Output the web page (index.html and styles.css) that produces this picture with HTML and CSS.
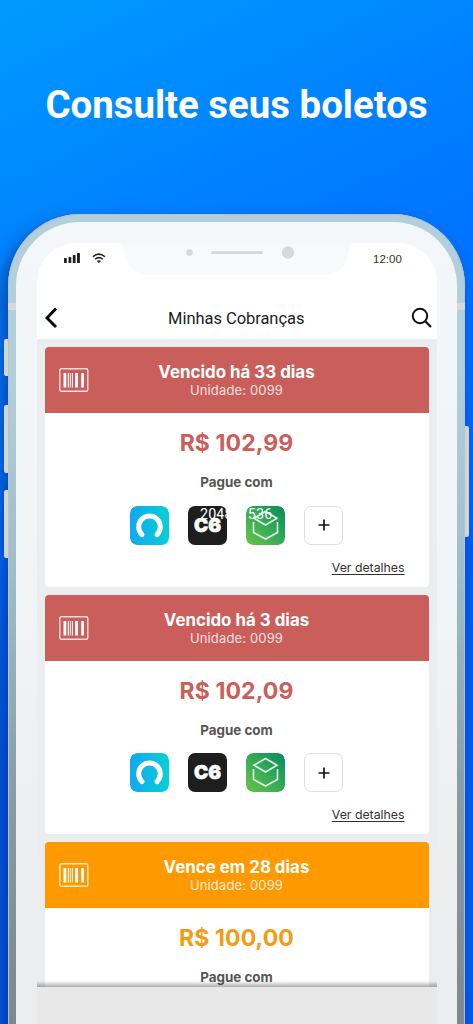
FILE: index.html
```
<!DOCTYPE html>
<html lang="pt-BR">
<head>
<meta charset="utf-8">
<title>Consulte seus boletos</title>
<link rel="stylesheet" href="styles.css">
</head>
<body>
<svg class="defs" width="0" height="0" aria-hidden="true">
  <defs>
    <linearGradient id="cyan" x1="0" y1="0" x2="1" y2="0"><stop offset="0" stop-color="#12a8ee"/><stop offset="1" stop-color="#06d0d5"/></linearGradient>
    <linearGradient id="green" x1="0" y1="1" x2="1" y2="0"><stop offset="0" stop-color="#68c547"/><stop offset=".5" stop-color="#35ab55"/><stop offset="1" stop-color="#078b60"/></linearGradient>
    <symbol id="barcode" viewBox="0 0 30 24">
      <rect x=".8" y=".8" width="28" height="22.4" rx="1.5" fill="none" stroke="#fff" stroke-opacity=".8" stroke-width="1.4"/>
      <path fill="#fff" d="M4.500 5h2.800v14.500H4.500zM8.800 5h1.300v14.500H8.800zM11.200 5h.9v14.500h-.9zM13 5h.9v14.500H13zM16.200 5H19v14.500h-2.800zM22.200 5H25v14.500h-2.800z"/>
    </symbol>
    <symbol id="arch" viewBox="0 0 39 39">
      <rect width="39" height="39" rx="7" fill="url(#cyan)"/>
      <path d="M12 28.600A10.800 10.800 0 1 1 27 28.600" fill="none" stroke="#fff" stroke-width="5" stroke-linecap="round"/>
    </symbol>
    <symbol id="box" viewBox="0 0 39 39">
      <rect width="39" height="39" rx="7" fill="url(#green)"/>
      <path d="M19.500 5.500L31 12.200 19.500 19 8 12.200zM7.500 16v10.500l12 6.500 12-6.500V16" fill="none" stroke="#e2f6e8" stroke-width="1.600"/>
    </symbol>
  </defs>
</svg>
<main class="page">
  <h1 class="headline">Consulte seus boletos</h1>
  <div class="phone">
    <i class="key key-mute"></i><i class="key key-up"></i><i class="key key-down"></i><i class="key key-power"></i>
    <i class="band band-left"></i><i class="band band-right"></i>
    <div class="bezel">
      <div class="screen">
        <div class="status">
          <svg class="signals" width="44" height="14" viewBox="0 0 44 14">
            <path fill="#222" d="M0 7.500q0-.5.500-.5h1.800q.5 0 .5.500V12H0zM4.500 6.500q0-.5.500-.5h1.800q.5 0 .5.500V12H4.500zM8.800 4.500q0-.5.500-.5h1.800q.5 0 .5.500V12H8.800zM13 2.500q0-.5.500-.5h1.900q.5 0 .5.500V12H13z"/>
            <g fill="none" stroke="#222" stroke-width="1.500"><path d="M28.900 5.800q6-5.400 12 0M31 8.300q3.900-3.400 7.800 0"/></g>
            <path fill="#222" d="M32.800 9.900q2.100-1.500 4.200 0L34.900 12z"/>
          </svg>
          <svg class="notch" width="237" height="32" viewBox="0 0 237 32"><path fill="#f7f9fb" d="M0 0H237Q231 0 231 7C228 24 220 32 204 32H31C17 32 8 22 6 7Q6 0 0 0z"/><g fill="#d8d8d8"><circle cx="71.500" cy="9.500" r="3.300"/><rect x="93" y="8" width="52" height="3" rx="1.500"/><circle cx="170" cy="9.500" r="6.200"/></g></svg>
          <span class="time">12:00</span>
        </div>
        <header class="bar">
          <svg width="14" height="22" viewBox="0 0 14 22"><path d="M12 1.500L3 11l9 9" fill="none" stroke="#000" stroke-width="2.900"/></svg>
          <span class="title">Minhas Cobranças</span>
          <svg width="22" height="22" viewBox="0 0 22 22"><circle cx="9" cy="9" r="7.200" fill="none" stroke="#111" stroke-width="2"/><path d="M14 14l6 6" stroke="#111" stroke-width="2.300"/></svg>
        </header>
        <div class="list">
          <article class="card">
            <div class="card-head overdue"><svg class="barcode"><use href="#barcode"/></svg><strong>Vencido há 33 dias</strong><span>Unidade: 0099</span></div>
            <div class="amount red">R$ 102,99</div>
            <div class="pay">Pague com</div>
            <div class="apps"><svg><use href="#arch"/></svg><div class="c6">C6</div><svg><use href="#box"/></svg><div class="more"><svg viewBox="0 0 12 12"><path d="M6 .5v11M.5 6h11" stroke="#111" stroke-width="1.700"/></svg></div><span class="dims">2048x1536</span></div>
            <a class="details">Ver detalhes</a>
          </article>
          <article class="card">
            <div class="card-head overdue"><svg class="barcode"><use href="#barcode"/></svg><strong>Vencido há 3 dias</strong><span>Unidade: 0099</span></div>
            <div class="amount red">R$ 102,09</div>
            <div class="pay">Pague com</div>
            <div class="apps"><svg><use href="#arch"/></svg><div class="c6">C6</div><svg><use href="#box"/></svg><div class="more"><svg viewBox="0 0 12 12"><path d="M6 .5v11M.5 6h11" stroke="#111" stroke-width="1.700"/></svg></div></div>
            <a class="details">Ver detalhes</a>
          </article>
          <article class="card">
            <div class="card-head upcoming"><svg class="barcode"><use href="#barcode"/></svg><strong>Vence em 28 dias</strong><span>Unidade: 0099</span></div>
            <div class="amount orange">R$ 100,00</div>
            <div class="pay">Pague com</div>
          </article>
        </div>
      </div>
      <div class="dock"></div>
    </div>
  </div>
</main>
</body>
</html>
```

FILE: styles.css
```
* { box-sizing: border-box; }
body { margin: 0; font-family: Inter, sans-serif; }
.defs { position: absolute; }
.page {
  width: 473px; height: 1024px; overflow: hidden;
  background: linear-gradient(155deg, #009bff 0, #0080ff 23%, #006bff 46%, #005df0 62%, #005df0 100%);
}
.headline {
  margin: 0; height: 214px; padding-top: 82px;
  font: 700 38.400px/46px Roboto, sans-serif; color: #fff; text-align: center; white-space: nowrap;
}
.phone {
  position: relative; width: 457px; height: 900px; margin-left: 8px; padding: 8px;
  border-radius: 72px 72px 0 0;
  background: linear-gradient(#b3cfdc 0, #b3cfdc 18%, #9ebdc9 40%, #879ca4 65%, #7d888c 90%);
  box-shadow: inset 1px 1px 1px #b8c2c5, inset -1px 0 1px #b8c2c5, -6px 8px 16px rgba(0, 25, 90, .5);
}
.bezel {
  height: 892px; padding: 21px 21px 0; border-radius: 64px 64px 0 0; overflow: hidden;
  background: linear-gradient(#f4f7f9 0, #f2f5f7 35%, #ebedee 80%);
}
.key { position: absolute; width: 4px; background: #d3d5d5; border-radius: 2px 0 0 2px; }
.key-mute { left: -4px; top: 125px; height: 37px; }
.key-up { left: -4px; top: 191px; height: 68px; }
.key-down { left: -4px; top: 276px; height: 68px; }
.key-power { right: -4px; top: 212px; height: 111px; border-radius: 0 2px 2px 0; }
.band { position: absolute; top: 89px; width: 8px; height: 7px; background: #d7d9d9; }
.band-left { left: 0; }
.band-right { right: 0; }
.screen {
  height: 744px; width: 399.500px; background: #fff; border-radius: 39px 39px 0 0; overflow: hidden;
  display: flex; flex-direction: column; position: relative;
}
.screen::after {
  content: ""; position: absolute; left: 0; right: 0; bottom: 0; height: 6px;
  background: linear-gradient(transparent, rgba(0, 0, 0, .32));
}
.status { display: flex; height: 54px; align-items: flex-start; }
.signals { margin: 8px 0 0 27px; flex: none; }
.notch { margin-left: 10px; flex: none; }
.time { margin: 9px 0 0 18px; font: 11.500px/14px "Liberation Sans", sans-serif; color: #333; }
.bar { height: 42px; padding: 0 4px 0 7px; display: flex; align-items: center; justify-content: space-between; }
.title { font: 16.500px/20px Roboto, sans-serif; color: #1c1c1c; letter-spacing: -.05px; margin: 1px 0 0 4px; }
.list {
  flex: 1; min-height: 0; overflow: hidden; background: #ebedee; padding: 8px 8px 0 7.500px;
  display: flex; flex-direction: column; gap: 8px;
}
.card {
  flex: none; height: 239.500px; background: #fff; border-radius: 4px; overflow: hidden;
  display: flex; flex-direction: column; align-items: center;
}
.card-head {
  align-self: stretch; height: 66px; padding-top: 15px; color: #fff; position: relative;
  display: flex; flex-direction: column; align-items: center;
}
.card-head strong { font-size: 16.900px; line-height: 20px; font-weight: 650; }
.card-head span { font-size: 13px; line-height: 17px; opacity: .8; letter-spacing: .15px; }
.overdue { background: #ca5e5a; }
.upcoming { background: #ff9900; }
.barcode { position: absolute; left: 14px; top: 21px; width: 30px; height: 24px; }
.amount { margin-top: 15px; font-size: 23px; line-height: 30px; font-weight: 650; letter-spacing: .1px; }
.red { color: #ca5e5a; }
.orange { color: #f59a12; }
.pay { margin-top: 15px; font-size: 13.400px; line-height: 18px; font-weight: 650; color: #555; }
.apps { position: relative; margin-top: 14.500px; display: flex; gap: 19px; }
.apps > svg, .c6, .more { width: 39px; height: 39px; border-radius: 7px; }
.c6 {
  background: #1e1e1f; color: #fff; text-align: center;
  font-size: 19px; line-height: 39px; font-weight: 900; -webkit-text-stroke: .6px #fff;
}
.more { border: 1px solid #dedede; display: grid; place-items: center; }
.more svg { width: 12px; height: 12px; }
.dims { position: absolute; left: 70px; top: 0; font: 14.300px/17px Roboto, sans-serif; letter-spacing: .1px; color: #fff; }
.details {
  align-self: flex-end; margin: 14px 24px 0 0; font-size: 12.300px; line-height: 18px;
  color: #333; text-decoration: underline; text-underline-offset: 2px;
}
.dock { height: 60px; width: 399.500px; background: #e8e8e8; }
```
